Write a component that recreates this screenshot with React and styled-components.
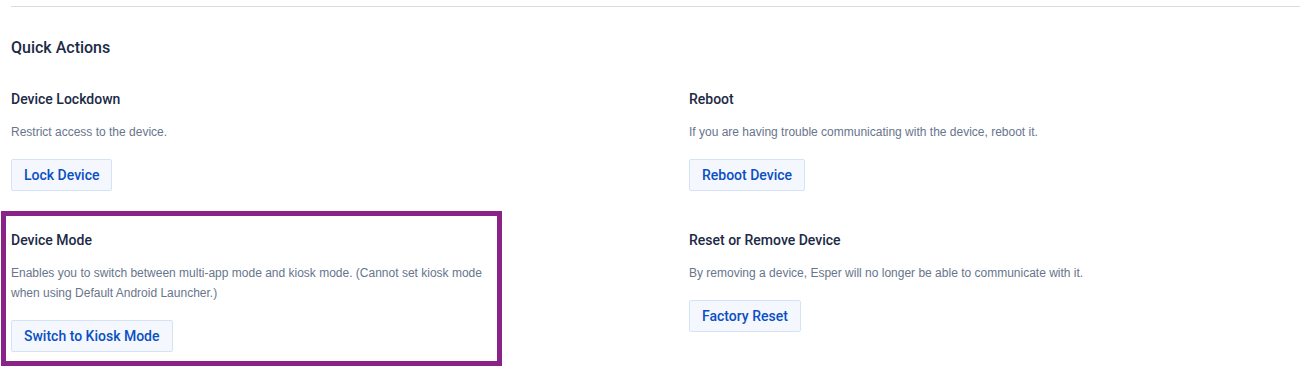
import React from "react";
import styled, { createGlobalStyle } from "styled-components";

const Global = createGlobalStyle`
  html, body { margin: 0; padding: 0; background: #ffffff; }
  body { font-family: "Liberation Sans", Arial, sans-serif; -webkit-font-smoothing: antialiased; }
`;

const Page = styled.div`
  padding: 6px 4px 0 11px;
  width: 1304px;
  height: 373px;
  box-sizing: border-box;
`;

const Divider = styled.hr`
  margin: 0;
  border: 0;
  height: 1px;
  background: #dedae5;
`;

const SectionTitle = styled.h2`
  margin: 29px 0 0;
  font-family: Roboto, "Liberation Sans", sans-serif;
  font-size: 16px;
  line-height: 24px;
  font-weight: 500;
  color: #1c2a46;
`;

const Grid = styled.div`
  display: grid;
  grid-template-columns: 678px 1fr;
  row-gap: 39px;
  margin-top: 29px;
`;

const Item = styled.section`
  position: relative;
  display: flex;
  flex-direction: column;
  align-items: flex-start;
`;

const Highlight = styled.div`
  position: absolute;
  left: -10px;
  top: -19px;
  width: 501px;
  height: 155px;
  border: 5px solid #8a2387;
  box-sizing: border-box;
  pointer-events: none;
`;

const ItemTitle = styled.h3`
  margin: 0;
  font-family: Roboto, "Liberation Sans", sans-serif;
  font-size: 14px;
  line-height: 20px;
  font-weight: 500;
  color: #1c2a46;
`;

const Desc = styled.p`
  margin: 13px 0 0;
  font-size: 12px;
  line-height: 20px;
  color: #68758c;
  max-width: ${(p) => p.$max || "none"};
`;

const Button = styled.button`
  margin-top: 17px;
  height: 32px;
  padding: 0 12px;
  border: 1px solid #d5e3f7;
  border-radius: 2px;
  background: #f4f8fe;
  color: #0b4fc2;
  font-family: Roboto, "Liberation Sans", sans-serif;
  font-size: 14px;
  font-weight: 500;
  cursor: pointer;
`;

const items = [
  { title: "Device Lockdown", desc: "Restrict access to the device.", btn: "Lock Device" },
  { title: "Reboot", desc: "If you are having trouble communicating with the device, reboot it.", btn: "Reboot Device" },
  {
    title: "Device Mode",
    desc: "Enables you to switch between multi-app mode and kiosk mode. (Cannot set kiosk mode when using Default Android Launcher.)",
    btn: "Switch to Kiosk Mode",
    max: "480px",
    highlight: true,
  },
  { title: "Reset or Remove Device", desc: "By removing a device, Esper will no longer be able to communicate with it.", btn: "Factory Reset" },
];

export default function App() {
  return (
    <>
      <Global />
      <Page>
        <Divider />
        <SectionTitle>Quick Actions</SectionTitle>
        <Grid>
          {items.map((it) => (
            <Item key={it.title}>
              {it.highlight && <Highlight />}
              <ItemTitle>{it.title}</ItemTitle>
              <Desc $max={it.max}>{it.desc}</Desc>
              <Button>{it.btn}</Button>
            </Item>
          ))}
        </Grid>
      </Page>
    </>
  );
}
